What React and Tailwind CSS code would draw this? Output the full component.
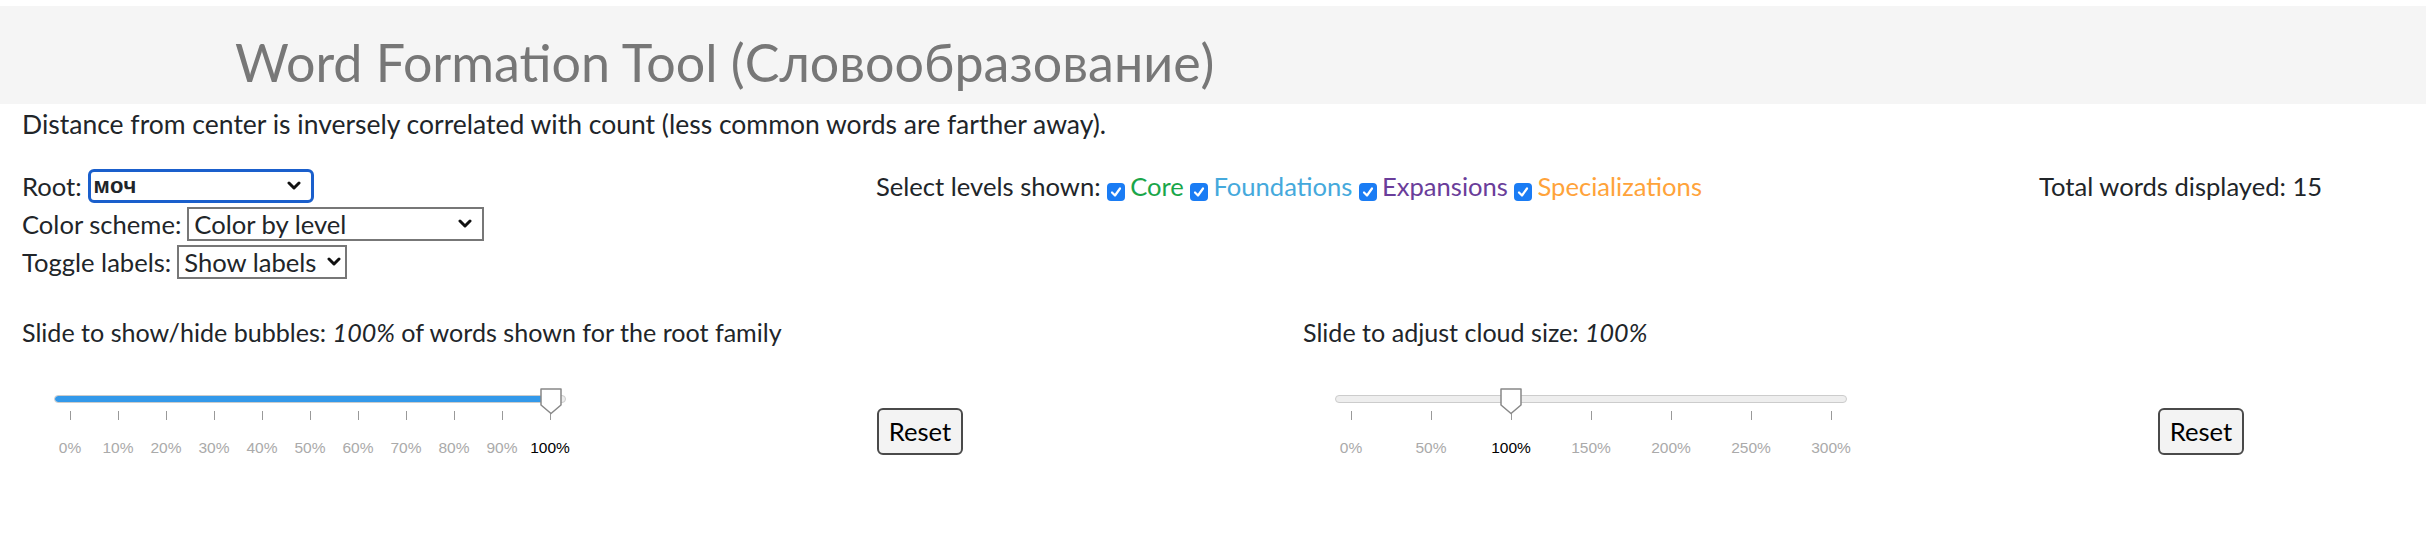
import React from 'react';

const levels = [
  { name: 'Core', color: 'text-[#1aa64a]' },
  { name: 'Foundations', color: 'text-[#45a9dc]' },
  { name: 'Expansions', color: 'text-[#6a3d9a]' },
  { name: 'Specializations', color: 'text-[#ffa33a]' },
];

const Chevron = () => (
  <svg width="14" height="10" viewBox="0 0 14 10" className="shrink-0">
    <path d="M2 2 L7 7 L12 2" fill="none" stroke="#111" strokeWidth="3" strokeLinecap="round" strokeLinejoin="round" />
  </svg>
);

const FakeSelect = ({ value, className, textClass }) => (
  <span className={`inline-flex items-center justify-between h-[34px] bg-white ${className}`}>
    <span className={textClass}>{value}</span>
    <Chevron />
  </span>
);

const Check = () => (
  <span className="inline-flex items-center justify-center w-[18px] h-[18px] rounded-[4px] bg-[#1a7cf4] align-[-2px] ml-[0px] mr-[5px]">
    <svg width="12" height="12" viewBox="0 0 12 12">
      <path d="M2 6.5 L5 9.5 L10 2.5" fill="none" stroke="#fff" strokeWidth="2.2" strokeLinecap="round" strokeLinejoin="round" />
    </svg>
  </span>
);

const Thumb = ({ className }) => (
  <svg width="22" height="27" viewBox="0 0 22 27" className={`absolute top-[-7px] ${className}`}>
    <path d="M1 1 H21 V17 L11 25.5 L1 17 Z" fill="#fff" stroke="#888" strokeWidth="1.5" strokeLinejoin="round" />
  </svg>
);

const Ticks = ({ labels, active, gridClass }) => (
  <div className={gridClass}>
    <div className="grid" style={{ gridTemplateColumns: `repeat(${labels.length}, 1fr)` }}>
      {labels.map((l) => (
        <div key={l} className="flex justify-center">
          <span className="block w-[1px] h-[9px] bg-[#999]" />
        </div>
      ))}
    </div>
    <div className="grid mt-[19px] font-['Liberation_Sans',sans-serif] text-[15.5px] leading-[18px]" style={{ gridTemplateColumns: `repeat(${labels.length}, 1fr)` }}>
      {labels.map((l) => (
        <div key={l} className={`text-center ${l === active ? 'text-black' : 'text-[#aaa]'}`}>{l}</div>
      ))}
    </div>
  </div>
);

const ResetButton = () => (
  <button className="mt-[13px] w-[86px] h-[47px] rounded-[6px] border-2 border-[#4a4a4a] bg-[#f3f3f3] text-[25.6px] leading-none text-black">
    Reset
  </button>
);

const App = () => {
  const pct = ['0%', '10%', '20%', '30%', '40%', '50%', '60%', '70%', '80%', '90%', '100%'];
  const size = ['0%', '50%', '100%', '150%', '200%', '250%', '300%'];

  return (
    <div className="font-['Lato',sans-serif] text-[25.6px] leading-[1.5] text-[#212529] bg-white min-h-[548px]">
      <div className="mt-[6px] h-[98px] bg-[#f5f5f5] pl-[235px] pt-[25px]">
        <h1 className="text-[52px] leading-[1.2] text-[#777] font-normal">Word Formation Tool (Словообразование)</h1>
      </div>

      <div className="px-[22px]">
        <p className="mt-[1px] mb-[22px] text-[26.5px]">
          Distance from center is inversely correlated with count (less common words are farther away).
        </p>

        <div className="grid grid-cols-[854px_1163px_1fr]">
          <div>
            <div className="flex items-center h-[38px] gap-[6px]">
              <span>Root:</span>
              <FakeSelect
                value="моч"
                className="w-[226px] border-[3px] border-[#1a5fcc] rounded-[6px] pl-[3px] pr-[10px]"
                textClass="font-['Liberation_Sans',sans-serif] text-[22px] font-bold tracking-[0.5px]"
              />
            </div>
            <div className="flex items-center h-[38px] gap-[6px]">
              <span>Color scheme:</span>
              <FakeSelect value="Color by level" className="w-[297px] border-2 border-[#777] pl-[5px] pr-[10px]" />
            </div>
            <div className="flex items-center h-[38px] gap-[6px]">
              <span>Toggle labels:</span>
              <FakeSelect value="Show labels" className="w-[170px] border-2 border-[#777] pl-[5px] pr-[4px]" />
            </div>
          </div>

          <div className="h-[38px] flex items-center">
            <span>
              Select levels shown:
              {levels.map((l) => (
                <span key={l.name}>
                  {' '}
                  <Check />
                  <span className={l.color}>{l.name}</span>
                </span>
              ))}
            </span>
          </div>

          <div className="h-[38px] flex items-center">Total words displayed: 15</div>
        </div>

        <div className="flex mt-[33px] text-[25.1px]">
          <div className="w-[1281px] shrink-0">
            <div>
              Slide to show/hide bubbles: <i>100%</i> of words shown for the root family
            </div>
            <div className="flex mt-[44px]">
              <div className="w-[855px] pl-[32px]">
                <div className="relative w-[512px]">
                  <div className="h-[8px] rounded-full border border-[#ccc] bg-[#eee] overflow-hidden">
                    <div className="h-full w-[500px] bg-[#3399ea] rounded-full" />
                  </div>
                  <Thumb className="left-[486px]" />
                  <Ticks labels={pct} active="100%" gridClass="ml-[-8px] w-[528px] mt-[8px]" />
                </div>
              </div>
              <ResetButton />
            </div>
          </div>

          <div>
            <div>
              Slide to adjust cloud size: <i>100%</i>
            </div>
            <div className="flex mt-[44px]">
              <div className="w-[855px] pl-[32px]">
                <div className="relative w-[512px]">
                  <div className="h-[8px] rounded-full border border-[#ccc] bg-[#eee]" />
                  <Thumb className="left-[165px]" />
                  <Ticks labels={size} active="100%" gridClass="ml-[-24px] w-[560px] mt-[8px]" />
                </div>
              </div>
              <ResetButton />
            </div>
          </div>
        </div>
      </div>
    </div>
  );
};

export default App;
